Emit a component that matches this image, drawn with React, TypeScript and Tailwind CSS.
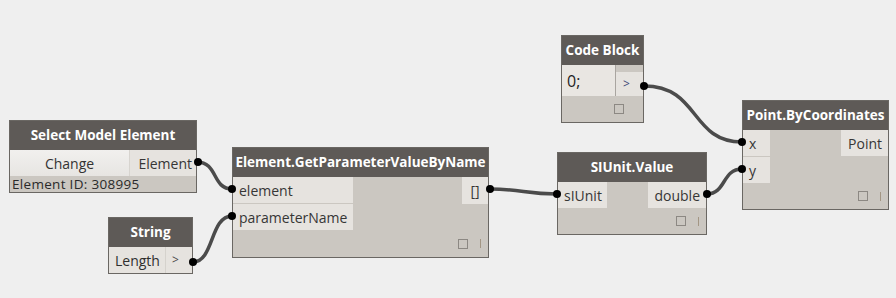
import type { ReactNode } from "react"

const font = { fontFamily: '"Open Sans", "Noto Sans", sans-serif' }

function Footer({ h, showI = true }: { h: string; showI?: boolean }) {
  return (
    <div className={`flex items-center justify-end gap-[12px] pr-[7px] ${h}`}>
      <span className="block w-[10px] h-[10px] border border-[#8c8883]" />
      {showI ? <span className="block w-px h-[9px] bg-[#a39684]" /> : <span className="w-[0px]" />}
    </div>
  )
}

function Header({ title }: { title: string }) {
  return (
    <div className="h-[29px] bg-[#5e5a57] text-white font-bold text-[13.5px] flex items-center justify-center px-[6px] whitespace-nowrap">
      {title}
    </div>
  )
}

function Port({ label, w, right = false }: { label: string; w: string; right?: boolean }) {
  return (
    <div
      className={`h-[26px] ${w} bg-[#e6e3df] text-[#363636] text-[14px] flex items-center px-[6px] whitespace-nowrap ${right ? "justify-end" : ""}`}
    >
      {label}
    </div>
  )
}

function Node({ className, children }: { className: string; children: ReactNode }) {
  return (
    <div className={`absolute bg-[#cbc7c1] border border-[#6a6763] ${className}`} style={font}>
      {children}
    </div>
  )
}

export default function App() {
  return (
    <div className="relative w-[896px] h-[298px] bg-[#efefef] overflow-hidden">
      {/* Select Model Element */}
      <Node className="left-[9px] top-[120px] w-[188px]">
        <Header title="Select Model Element" />
        <div className="flex h-[26px]">
          <div className="w-[120px] bg-gradient-to-b from-[#f1f0ee] to-[#e7e5e2] border-r border-[#d7d4cf] text-[14px] text-[#333] flex items-center justify-center">
            Change
          </div>
          <div className="flex-1 bg-[#e6e3df] text-[#363636] text-[14px] flex items-center justify-end pr-[4px]">
            Element
          </div>
        </div>
        <div className="h-[16px] text-[13.5px] tracking-[0.3px] text-[#2a2a2a] flex items-center pl-[2px] whitespace-nowrap">
          Element ID: 308995
        </div>
      </Node>

      {/* String */}
      <Node className="left-[108px] top-[217px] w-[85px]">
        <Header title="String" />
        <div className="flex h-[26px] bg-[#e6e3df]">
          <div className="w-[57px] text-[14px] text-[#2f2f2f] flex items-center pl-[6px] border-r border-[#d5d2cd]">Length</div>
          <div className="flex-1 text-[12px] text-[#4a4a4a] flex items-center pl-[6px]">&gt;</div>
        </div>
      </Node>

      {/* Element.GetParameterValueByName */}
      <Node className="left-[232px] top-[147px] w-[257px]">
        <Header title="Element.GetParameterValueByName" />
        <div className="flex justify-between">
          <div className="flex flex-col gap-px">
            <Port label="element" w="w-[120px]" />
            <Port label="parameterName" w="w-[120px]" />
          </div>
          <div className="flex flex-col">
            <div className="h-[27px] w-[26px] bg-[#e6e3df] text-[14px] text-[#363636] flex items-center justify-center">[]</div>
          </div>
        </div>
        <Footer h="h-[27px]" />
      </Node>

      {/* SIUnit.Value */}
      <Node className="left-[557px] top-[152px] w-[150px]">
        <Header title="SIUnit.Value" />
        <div className="flex justify-between">
          <Port label="sIUnit" w="w-[49px]" />
          <Port label="double" w="w-[58px]" right />
        </div>
        <Footer h="h-[26px]" />
      </Node>

      {/* Code Block */}
      <Node className="left-[561px] top-[35px] w-[83px]">
        <Header title="Code Block" />
        <div className="flex h-[31px]">
          <div className="w-[54px] bg-[#e9e6e2] border-r border-[#a9a5a0] text-[16px] text-[#1e1e1e] flex items-center pl-[5px]">0;</div>
          <div className="flex-1 flex flex-col">
            <div className="h-[7px]" />
            <div className="flex-1 bg-[#e6e3df] text-[12px] text-[#3e4a78] flex items-center pl-[7px]">&gt;</div>
          </div>
        </div>
        <Footer h="h-[26px]" showI={false} />
      </Node>

      {/* Point.ByCoordinates */}
      <Node className="left-[742px] top-[100px] w-[147px]">
        <Header title="Point.ByCoordinates" />
        <div className="flex justify-between">
          <div className="flex flex-col gap-px">
            <Port label="x" w="w-[27px]" />
            <Port label="y" w="w-[27px]" />
          </div>
          <Port label="Point" w="w-[47px]" right />
        </div>
        <Footer h="h-[26px]" />
      </Node>

      {/* wires */}
      <svg className="absolute inset-0" width="896" height="298" viewBox="0 0 896 298">
        <g fill="none" stroke="#4b4b4b" strokeWidth="3.5" strokeLinecap="round">
          <path d="M197 162 C 218 162, 212 189, 232 189" />
          <path d="M193 262 C 214 262, 210 216, 232 216" />
          <path d="M490 189 C 522 189, 525 194, 557 194" />
          <path d="M644 86 C 700 86, 690 142, 742 142" />
          <path d="M707 194 C 726 194, 722 169, 742 169" />
        </g>
        <g fill="#000">
          <circle cx="198" cy="162" r="4" />
          <circle cx="232" cy="189" r="4" />
          <circle cx="193" cy="262" r="4" />
          <circle cx="232" cy="216" r="4" />
          <circle cx="490" cy="189" r="4" />
          <circle cx="557" cy="194" r="4" />
          <circle cx="644" cy="86" r="4" />
          <circle cx="742" cy="142" r="4" />
          <circle cx="707" cy="194" r="4" />
          <circle cx="742" cy="169" r="4" />
        </g>
      </svg>
    </div>
  )
}
